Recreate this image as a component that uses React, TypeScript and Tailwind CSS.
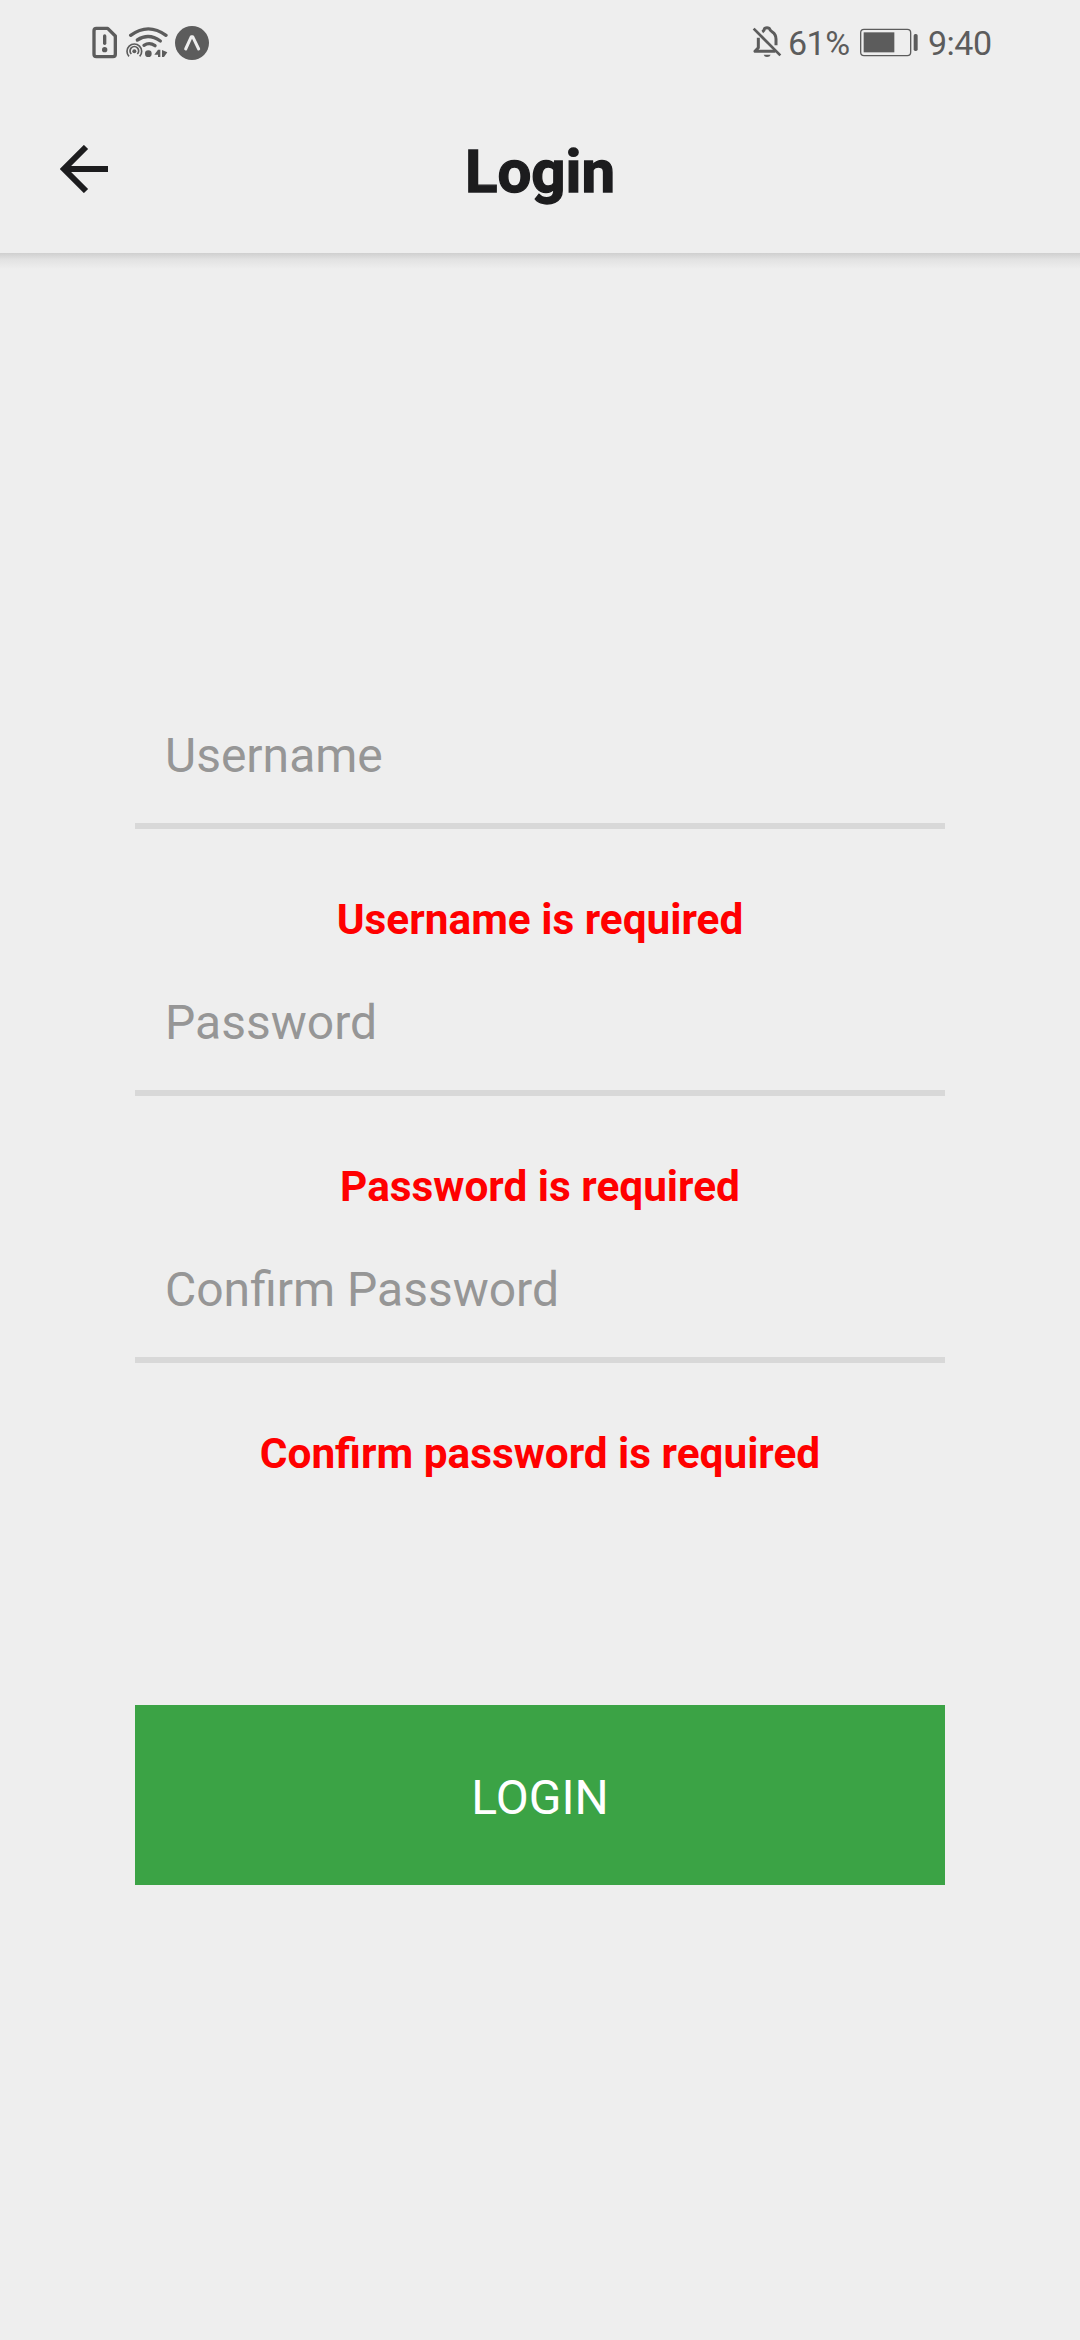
const fields = [
  { label: "Username", error: "Username is required" },
  { label: "Password", error: "Password is required" },
  { label: "Confirm Password", error: "Confirm password is required" },
];

function StatusBar() {
  return (
    <div className="h-[84px] pt-[2px] flex items-center pl-[92px] pr-[87px] text-[#5c5c5c]">
      <svg width="26" height="34" viewBox="36 33 78 102" fill="none" stroke="currentColor">
        <path d="M49 40H83L106 63V118Q106 125 99 125H49Q42 125 42 118V47Q42 40 49 40Z" strokeWidth="10" strokeLinejoin="round" />
        <path d="M74 63V85" strokeWidth="10" strokeLinecap="round" />
        <circle cx="74" cy="104" r="8" fill="currentColor" stroke="none" />
      </svg>
      <svg className="ml-[8px]" width="42" height="34" viewBox="138 33 126 102" fill="none" stroke="currentColor">
        <path d="M152 61Q205 22 258 61" strokeWidth="10" strokeLinecap="round" />
        <path d="M172 75Q206 53 241 78" strokeWidth="10" strokeLinecap="round" />
        <path d="M192 91Q208 80 225 92" strokeWidth="10" strokeLinecap="round" />
        <path d="M147 124A22 22 0 1 1 179 124" strokeWidth="5" />
        <path d="M154 117A13 13 0 1 1 172 117" strokeWidth="5" />
        <circle cx="163" cy="109" r="6" fill="currentColor" stroke="none" />
        <circle cx="205" cy="116" r="10" fill="currentColor" stroke="none" />
        <path d="M241 104V126H234V119H223L234 104Z M246 105L262 112L252 126H246Z" fill="currentColor" stroke="none" />
      </svg>
      <svg className="ml-[7px]" width="34" height="34" viewBox="285 33 102 102">
        <circle cx="336" cy="84" r="51" fill="currentColor" />
        <path d="M317 102L334 65H338L356 102" fill="none" stroke="#eeeeee" strokeWidth="9" strokeLinecap="round" strokeLinejoin="round" />
      </svg>
      <svg className="ml-auto" width="30" height="34" viewBox="36 33 90 102" fill="none" stroke="currentColor">
        <path d="M55 68V98L45 109H106M67 51Q73 47 74 40Q81 37 88 40Q90 47 97 51Q108 58 108 72V91" strokeWidth="9" strokeLinejoin="round" />
        <path d="M41 41L121 121" strokeWidth="8" />
        <path d="M71 119H92Q90 126 81 126Q73 126 71 119Z" fill="currentColor" stroke="none" />
      </svg>
      <span className="ml-[6px] w-[62px] text-[34px] leading-none tracking-[-0.5px] whitespace-nowrap">61%</span>
      <svg className="ml-[10px]" width="58" height="34" viewBox="360 33 174 102">
        <rect x="362" y="43" width="150" height="79" rx="10" fill="none" stroke="currentColor" strokeWidth="4" />
        <rect x="371" y="52" width="92" height="60" fill="currentColor" />
        <rect x="521" y="57" width="12" height="51" rx="5" fill="currentColor" />
      </svg>
      <span className="ml-[10px] w-[65px] text-[34px] leading-none tracking-[-0.5px] whitespace-nowrap">9:40</span>
    </div>
  );
}

export default function App() {
  return (
    <div className="w-[1080px] h-[2340px] bg-[#eeeeee] font-['Roboto',sans-serif] flex flex-col">
      <StatusBar />
      <header className="h-[169px] grid grid-cols-[1fr_auto_1fr] items-center">
        <div className="pl-[60px]">
          <svg width="48" height="48" viewBox="60 75 144 144" fill="none" stroke="#1c1c1e">
            <path d="M204 147H72" strokeWidth="18" />
            <path d="M138 81L72 147L138 213" strokeWidth="18" />
          </svg>
        </div>
        <h1 className="pt-[6px] text-[60px] leading-[70px] font-bold text-[#1c1c1e] [-webkit-text-stroke:1.3px_#1c1c1e]">Login</h1>
      </header>
      <div className="h-[16px] bg-linear-to-b from-[#cfcfcf] via-[#e2e2e2] via-40% to-[#eeeeee]" />
      <main className="px-[135px] pt-[427px]">
        {fields.map((f) => (
          <div key={f.label} className="h-[267px]">
            <div className="h-[133px] border-b-[6px] border-[#d8d8d8] pl-[30px] pt-[32px] text-[48px] leading-[56px] text-[#969696]">{f.label}</div>
            <p className="pt-[63px] text-center text-[42.35px] leading-[56px] font-bold text-[#ff0000]">{f.error}</p>
          </div>
        ))}
        <button className="mt-[208px] w-full h-[180px] pt-[5px] bg-[#3ba345] text-white text-[48px]">LOGIN</button>
      </main>
    </div>
  );
}
